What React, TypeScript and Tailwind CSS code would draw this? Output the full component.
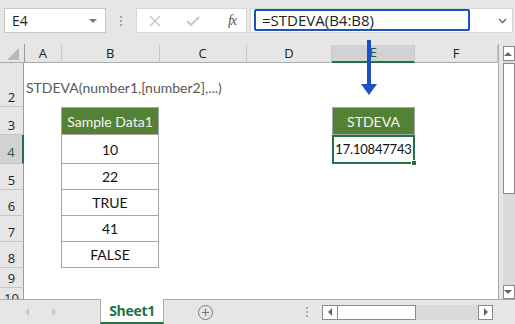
import { Plus } from "lucide-react";

type Row = {
  n: number;
  h: string;
};

const rows: Row[] = [
  { n: 2, h: "h-[44px]" },
  { n: 3, h: "h-[28px]" },
  { n: 4, h: "h-[29px]" },
  { n: 5, h: "h-[26px]" },
  { n: 6, h: "h-[26px]" },
  { n: 7, h: "h-[26px]" },
  { n: 8, h: "h-[26px]" },
  { n: 9, h: "h-[20px]" },
  { n: 10, h: "h-[20px]" },
];

const cols = [
  { name: "A", w: "w-[37px]" },
  { name: "B", w: "w-[98px]" },
  { name: "C", w: "w-[87px]" },
  { name: "D", w: "w-[86px]" },
  { name: "E", w: "w-[83px]" },
  { name: "F", w: "w-[83px]" },
];

const sampleData: Record<number, string> = {
  4: "10",
  5: "22",
  6: "TRUE",
  7: "41",
  8: "FALSE",
};

const cellFont = "font-['Lato','Noto_Sans',sans-serif] text-[14px] text-[#111]";

function BCell({ n }: { n: number }) {
  if (n === 3) {
    return (
      <div className="w-[98px] h-full border border-[#a6a6a6] bg-[#548235] flex items-center justify-center">
        <span className="font-['Lato','Noto_Sans',sans-serif] text-[14px] text-[#f4f4f4]">
          Sample Data1
        </span>
      </div>
    );
  }
  if (sampleData[n]) {
    return (
      <div className={`w-[98px] h-full border-x border-b border-[#a6a6a6] flex items-center justify-center ${cellFont}`}>
        {sampleData[n]}
      </div>
    );
  }
  return <div className="w-[98px] h-full" />;
}

function ECell({ n }: { n: number }) {
  if (n === 3) {
    return (
      <div className="w-[83px] h-full border border-[#a6a6a6] bg-[#548235] flex items-center justify-center">
        <span className="font-['Lato','Noto_Sans',sans-serif] text-[14px] text-[#f4f4f4]">
          STDEVA
        </span>
      </div>
    );
  }
  if (n === 4) {
    return (
      <div className="relative w-[83px] h-full border-2 border-[#217346] flex items-center justify-center font-['Lato','Noto_Sans',sans-serif] text-[13px] tracking-[-0.2px] text-[#111]">
        17.10847743
        <div className="absolute -right-[4px] -bottom-[4px] w-[6px] h-[6px] bg-[#217346] border border-white" />
      </div>
    );
  }
  return <div className="w-[83px] h-full" />;
}

export default function App() {
  return (
    <div className="relative w-[515px] h-[324px] overflow-hidden bg-[#e6e6e6] flex flex-col font-['Open_Sans','Noto_Sans',sans-serif]">
      {/* Formula bar */}
      <div className="h-[44px] shrink-0 flex items-start pt-[8px] pl-[4px] pr-[2px]">
        <div className="w-[102px] h-[25px] bg-white border border-[#c6c6c6] flex items-center justify-between pl-[7px] pr-[8px]">
          <span className="text-[14px] text-[#222]">E4</span>
          <div className="w-0 h-0 border-x-[4px] border-x-transparent border-t-[4px] border-t-[#777]" />
        </div>
        <div className="w-[30px] h-[25px] flex flex-col items-center justify-center gap-[2px]">
          <div className="w-[2px] h-[2px] bg-[#a6a6a6]" />
          <div className="w-[2px] h-[2px] bg-[#a6a6a6]" />
          <div className="w-[2px] h-[2px] bg-[#a6a6a6]" />
        </div>
        <div className="w-[111px] h-[25px] bg-white border border-[#d6d6d6] flex items-center pl-[12px] pr-[10px] justify-between">
          <svg width="12" height="12" viewBox="0 0 12 12">
            <path d="M1 1 L11 11 M11 1 L1 11" stroke="#c4c4c4" strokeWidth="1.4" fill="none" />
          </svg>
          <svg width="14" height="12" viewBox="0 0 14 12" className="ml-[8px]">
            <path d="M1 6 L5 10 L13 2" stroke="#c4c4c4" strokeWidth="1.8" fill="none" />
          </svg>
          <span className="ml-[10px] font-['Liberation_Serif',serif] italic text-[14px] text-[#555] tracking-[-1px]">
            fx
          </span>
        </div>
        <div className="ml-[3px] flex-1 h-[25px] bg-white border border-[#d6d6d6] flex items-start pl-[3px] pr-[4px]">
          <div className="w-[216px] h-[22px] border-2 border-[#1f4fc4] rounded-[2px] flex items-center pl-[6px]">
            <span className="text-[15px] text-[#222] leading-none">=STDEVA(B4:B8)</span>
          </div>
          <div className="flex-1 h-full flex items-center justify-end pr-[1px]">
            <svg width="9" height="6" viewBox="0 0 9 6">
              <path d="M1 1 L4.5 4.5 L8 1" stroke="#777" strokeWidth="1.6" fill="none" />
            </svg>
          </div>
        </div>
      </div>

      {/* Grid + vertical scrollbar */}
      <div className="flex flex-1 min-h-0">
        <div className="w-[499px] flex flex-col border-r border-[#ababab] overflow-hidden">
          {/* Column headers */}
          <div className="h-[19px] shrink-0 flex border-b border-[#ababab]">
            <div className="w-[25px] h-full border-r border-[#9b9b9b] flex items-end justify-end pr-[5px] pb-[2px]">
              <div className="w-0 h-0 border-l-[12px] border-l-transparent border-b-[12px] border-b-[#b9b9b9]" />
            </div>
            {cols.map((c) =>
              c.name === "E" ? (
                <div
                  key={c.name}
                  className={`${c.w} h-full bg-[#d2d2d2] border-r border-[#c6c6c6] border-b-2 border-b-[#217346] mt-px flex items-center justify-center text-[13px] text-[#285c3c]`}
                >
                  {c.name}
                </div>
              ) : (
                <div
                  key={c.name}
                  className={`${c.w} h-full border-r border-[#c6c6c6] mt-px flex items-center justify-center text-[13px] text-[#222]`}
                >
                  {c.name}
                </div>
              )
            )}
          </div>

          {/* Rows */}
          {rows.map((r) => (
            <div key={r.n} className={`${r.h} shrink-0 flex`}>
              {r.n === 4 ? (
                <div className="w-[25px] h-full bg-[#d2d2d2] border-r-2 border-[#217346] border-b border-b-[#c6c6c6] flex items-end justify-center pb-[1px] text-[13px] text-[#285c3c]">
                  {r.n}
                </div>
              ) : (
                <div className="w-[25px] h-full border-r border-[#9b9b9b] border-b border-b-[#c6c6c6] flex items-end justify-center pb-[1px] text-[13px] leading-[16px] text-[#222]">
                  {r.n}
                </div>
              )}
              <div className="flex-1 h-full bg-white flex">
                <div className="w-[37px] h-full relative">
                  {r.n === 2 && (
                    <span className="absolute left-[2px] top-[14px] whitespace-nowrap font-['Lato','Noto_Sans',sans-serif] text-[14px] text-[#595959]">
                      STDEVA(number1,[number2],...)
                    </span>
                  )}
                </div>
                <BCell n={r.n} />
                <div className="w-[87px] h-full" />
                <div className="w-[86px] h-full" />
                <ECell n={r.n} />
                <div className="w-[83px] h-full" />
              </div>
            </div>
          ))}
        </div>

        {/* Vertical scrollbar */}
        <div className="flex-1 flex flex-col pl-[4px] pt-[2px]">
          <div className="h-[15px] bg-white border border-[#8a8a8a] flex items-center justify-center pr-[2px]">
            <div className="w-0 h-0 border-x-[4px] border-x-transparent border-b-[4px] border-b-[#666]" />
          </div>
          <div className="flex-1 bg-[#dadada] flex flex-col">
            <div className="h-[131px] mt-[2px] bg-white border border-[#8a8a8a]" />
          </div>
          <div className="h-[14px] bg-white border border-[#8a8a8a] flex items-center justify-center pr-[2px]">
            <div className="w-0 h-0 border-x-[4px] border-x-transparent border-t-[4px] border-t-[#666]" />
          </div>
        </div>
      </div>

      {/* Sheet tabs */}
      <div className="h-[25px] shrink-0 flex">
        <div className="w-[100px] h-full border-t border-[#ababab] flex items-center pl-[25px] gap-[23px]">
          <div className="w-0 h-0 border-y-[4px] border-y-transparent border-r-[4px] border-r-[#c6c6c6]" />
          <div className="w-0 h-0 border-y-[4px] border-y-transparent border-l-[4px] border-l-[#c6c6c6]" />
        </div>
        <div className="w-[64px] h-full bg-white border-x border-[#ababab] border-b-2 border-b-[#217346] flex items-center justify-center">
          <span className="text-[14px] font-bold text-[#217346] tracking-[-0.3px]">Sheet1</span>
        </div>
        <div className="flex-1 h-full border-t border-[#ababab] flex items-center">
          <div className="ml-[34px] w-[15px] h-[15px] rounded-full border-[1.5px] border-[#7a7a7a] flex items-center justify-center">
            <Plus size={11} strokeWidth={2.5} color="#7a7a7a" />
          </div>
          <div className="ml-[93px] flex flex-col gap-[2px]">
            <div className="w-[2px] h-[2px] bg-[#b0b0b0]" />
            <div className="w-[2px] h-[2px] bg-[#b0b0b0]" />
            <div className="w-[2px] h-[2px] bg-[#b0b0b0]" />
          </div>
          <div className="ml-[14px] w-[171px] h-[15px] flex bg-[#dadada]">
            <div className="w-[16px] h-full bg-white border border-[#8a8a8a] flex items-center justify-center">
              <div className="w-0 h-0 border-y-[4px] border-y-transparent border-r-[4px] border-r-[#666]" />
            </div>
            <div className="w-[78px] h-full bg-white border-y border-r border-[#8a8a8a]" />
            <div className="flex-1" />
            <div className="w-[15px] h-full bg-white border border-[#8a8a8a] flex items-center justify-center">
              <div className="w-0 h-0 border-y-[4px] border-y-transparent border-l-[4px] border-l-[#666]" />
            </div>
          </div>
        </div>
      </div>

      {/* Blue arrow from formula to result */}
      <div className="absolute left-[367px] top-[40px] w-[4px] h-[46px] bg-[#1f4fc4]" />
      <div className="absolute left-[361px] top-[84px] w-0 h-0 border-x-[8px] border-x-transparent border-t-[11px] border-t-[#1f4fc4]" />
    </div>
  );
}
